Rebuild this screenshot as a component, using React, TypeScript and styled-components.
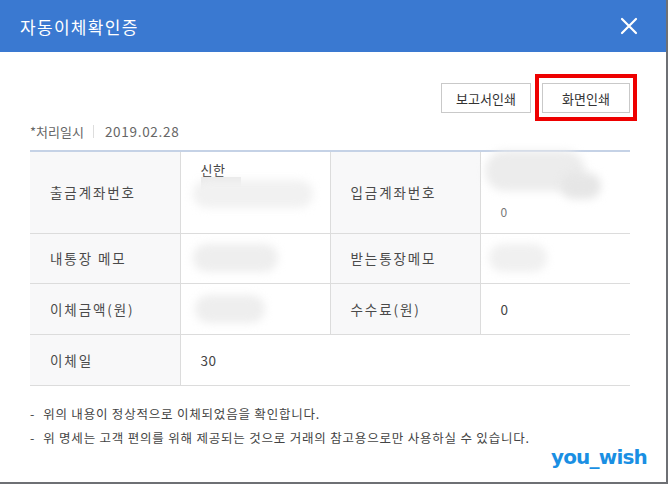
import React from 'react';
import styled, {createGlobalStyle} from 'styled-components';

const GlobalStyle = createGlobalStyle`
  html, body {
    margin: 0;
    padding: 0;
    background: #6e7074;
  }
  body {
    font-family: "Noto Sans CJK KR", "Noto Sans", sans-serif;
    color: #333;
  }
`;

const Modal = styled.div`
  position: relative;
  width: 666px;
  height: 482px;
  background: #fff;
  display: flex;
  flex-direction: column;
`;

const Header = styled.header`
  height: 52px;
  flex: none;
  background: #3a79d1;
  display: flex;
  align-items: center;
  justify-content: space-between;
  padding: 0 28px 0 20px;
  >h1{
    margin: 0;
    font-size: 17px;
    font-weight: 400;
    color: #fff;
    letter-spacing: 1.3px;
  }
`;

const CloseButton = styled.button`
  border: none;
  background: none;
  padding: 0;
  width: 18px;
  height: 18px;
  display: flex;
  cursor: pointer;
`;

const Body = styled.div`
  padding: 31px 36px 0 30px;
  display: flex;
  flex-direction: column;
`;

const Toolbar = styled.div`
  display: flex;
  justify-content: flex-end;
  gap: 11px;
`;

const PrintButton = styled.button<{ $width: number; $marked?: boolean }>`
  position: relative;
  width: ${p => p.$width}px;
  height: 30px;
  background: #fff;
  border: 1px solid #c9c9c9;
  font-family: inherit;
  font-size: 13px;
  color: #333;
  padding: 0;
  ${p => p.$marked && `
    &::after{
      content: '';
      position: absolute;
      left: -8px;
      right: -8px;
      top: -10px;
      bottom: -9px;
      border: 4px solid #ee0000;
    }
  `}
`;

const DateLine = styled.div`
  margin-top: 8px;
  height: 20px;
  display: flex;
  align-items: center;
  font-size: 13px;
  color: #666;
  >i{
    display: block;
    width: 1px;
    height: 13px;
    background: #ddd;
    margin: 0 9px 0 9px;
  }
  >b{
    font-weight: 400;
    font-size: 13.5px;
    letter-spacing: 0.7px;
    margin-left: 2px;
  }
`;

const Table = styled.table`
  margin-top: 9px;
  width: 600px;
  border-collapse: collapse;
  table-layout: fixed;
  border-top: 2px solid #c5d2e6;
  border-bottom: 1px solid #cfcfcf;
  font-size: 13.5px;
  td, th{
    border: 1px solid #dcdcdc;
    padding: 0 0 0 20px;
    text-align: left;
    font-weight: 400;
    vertical-align: middle;
  }
  tr:first-child td, tr:first-child th{ border-top: none; }
  td:first-child, th:first-child{ border-left: none; }
  td:last-child{ border-right: none; }
`;

const Row = styled.tr<{ $h: number }>`
  height: ${p => p.$h}px;
`;

const Label = styled.th`
  background: #f8f8f9;
  color: #4a4a4a;
  letter-spacing: 1.9px;
`;

const Value = styled.td`
  color: #444;
  letter-spacing: 0.6px;
`;

const Blur = styled.span<{ $w: number; $h: number; $shade?: string; $mt?: number; $ml?: number }>`
  display: block;
  width: ${p => p.$w}px;
  height: ${p => p.$h}px;
  margin-top: ${p => p.$mt ?? 0}px;
  margin-left: ${p => p.$ml ?? 0}px;
  background: ${p => p.$shade ?? '#efefef'};
  border-radius: ${p => p.$h / 2}px;
  filter: blur(4px);
`;

const Patch = styled.span<{ $w: number; $h: number; $shade?: string }>`
  display: block;
  width: ${p => p.$w}px;
  height: ${p => p.$h}px;
  background: ${p => p.$shade ?? '#e9e9e9'};
`;

const Stack = styled.div`
  position: relative;
  display: flex;
  flex-direction: column;
`;

const Notes = styled.ul`
  list-style: none;
  margin: 16px 0 0 0;
  padding: 0;
  font-size: 12.5px;
  letter-spacing: 0.8px;
  color: #444;
  >li{
    line-height: 24px;
    &::before{
      content: '-';
      margin-right: 8px;
    }
  }
`;

const Watermark = styled.span`
  position: absolute;
  right: 19px;
  bottom: 13px;
  font-family: "DejaVu Sans", sans-serif;
  font-weight: 700;
  font-size: 20px;
  color: #1a8fe3;
  letter-spacing: -0.8px;
`;

export default function App() {
  return (
    <Modal>
      <GlobalStyle/>
      <Header>
        <h1>자동이체확인증</h1>
        <CloseButton aria-label="닫기">
          <svg width="18" height="18" viewBox="0 0 18 18">
            <path d="M2 2L16 16M16 2L2 16" stroke="#fff" strokeWidth="2.2" strokeLinecap="round"/>
          </svg>
        </CloseButton>
      </Header>
      <Body>
        <Toolbar>
          <PrintButton $width={90}>보고서인쇄</PrintButton>
          <PrintButton $width={88} $marked>화면인쇄</PrintButton>
        </Toolbar>
        <DateLine>
          <span>*처리일시</span>
          <i/>
          <b>2019.02.28</b>
        </DateLine>
        <Table>
          <colgroup>
            <col style={{width: 150}}/>
            <col style={{width: 150}}/>
            <col style={{width: 150}}/>
            <col style={{width: 150}}/>
          </colgroup>
          <tbody>
            <Row $h={82}>
              <Label>출금계좌번호</Label>
              <Value>
                <Stack>
                  <span style={{fontSize: 13, lineHeight: '14px', marginTop: -14}}>신한</span>
                  <Patch $w={40} $h={17}/>
                  <Blur $w={120} $h={28} $mt={-14} $ml={-8} $shade="#f1f1f1"/>
                </Stack>
              </Value>
              <Label>입금계좌번호</Label>
              <Value>
                <Stack>
                  <Blur $w={100} $h={40} $mt={-14} $ml={-16} $shade="#ececec"/>
                  <Blur $w={40} $h={26} $mt={-18} $ml={60} $shade="#e6e6e6"/>
                  <span style={{fontSize: 12, marginTop: 4, color: '#777'}}>0</span>
                </Stack>
              </Value>
            </Row>
            <Row $h={50}>
              <Label>내통장 메모</Label>
              <Value><Blur $w={85} $h={28} $ml={-8} $shade="#eeeeee"/></Value>
              <Label>받는통장메모</Label>
              <Value><Blur $w={58} $h={28} $ml={-12} $shade="#f0f0f0"/></Value>
            </Row>
            <Row $h={51}>
              <Label>이체금액(원)</Label>
              <Value><Blur $w={70} $h={28} $ml={-6} $shade="#eeeeee"/></Value>
              <Label>수수료(원)</Label>
              <Value>0</Value>
            </Row>
            <Row $h={51}>
              <Label>이체일</Label>
              <Value colSpan={3}>30</Value>
            </Row>
          </tbody>
        </Table>
        <Notes>
          <li>위의 내용이 정상적으로 이체되었음을 확인합니다.</li>
          <li>위 명세는 고객 편의를 위해 제공되는 것으로 거래의 참고용으로만 사용하실 수 있습니다.</li>
        </Notes>
      </Body>
      <Watermark>you_wish</Watermark>
    </Modal>
  );
}
